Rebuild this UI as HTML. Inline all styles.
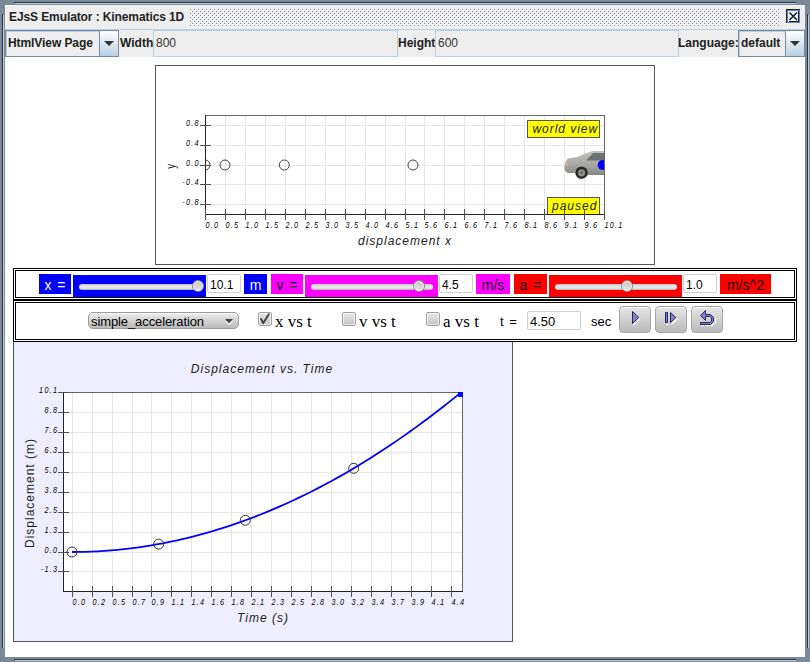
<!DOCTYPE html>
<html><head><meta charset="utf-8">
<style>
*{margin:0;padding:0;box-sizing:border-box}
html,body{width:810px;height:662px;overflow:hidden;background:#7a8a99;font-family:"Liberation Sans",sans-serif}
.a{position:absolute}
.tb{font-weight:bold;font-size:12px;color:#222;white-space:pre}
.lbl{font-size:14px;white-space:pre;text-align:center;line-height:20px;padding-top:1px;word-spacing:2px}
.num{background:#fff;border:1px solid #cfcfcf;border-radius:2px;font-size:12px;line-height:17px;padding:2px 0 0 2px;color:#000;white-space:pre}
.trk{height:6px;border-radius:3px;background:linear-gradient(#c4c4c4,#ececec 45%,#dedede 75%,#a8a8a8)}
.thm{width:12px;height:12px;border-radius:50%;border:1px solid #8c8c8c;background:linear-gradient(#c6c6c6,#e4e4e4);box-shadow:inset 0 0 0 1px #f4f4f4}
.sel{border:1px solid #9c9c9c;border-radius:5px;background:linear-gradient(#ececec,#d6d6d6 45%,#b9b9b9);box-shadow:inset 0 1px 0 #fafafa;font-size:13px;letter-spacing:-0.1px;line-height:15px;padding:1px 0 0 2px;color:#000;white-space:pre}
.chk{width:14px;height:14px;border:1px solid #a0a0a0;border-radius:2px;background:linear-gradient(#e8e8e8,#c4c4c4);box-shadow:inset 0 0 0 1px rgba(255,255,255,0.6)}
.ser{font-family:"Liberation Serif",serif;font-size:17px;line-height:20px;white-space:pre;color:#000}
.ctl{font-size:13px;line-height:16px;white-space:pre;color:#000;word-spacing:2px}
.btn{width:32px;height:27px;border:1px solid #a6a6a6;border-radius:4px;background:linear-gradient(#e6e6e6,#bababa);box-shadow:inset 0 1px 0 rgba(255,255,255,0.75)}
.tick{font-style:italic;font-size:8px;letter-spacing:0.8px;white-space:pre;color:#222}
</style></head><body>
<!-- frame corner lines -->
<div class="a" style="left:14px;top:2px;width:782px;height:1px;background:#333"></div>
<div class="a" style="left:15px;top:3px;width:781px;height:1px;background:#b8cfe5"></div>
<div class="a" style="left:2px;top:14px;width:1px;height:634px;background:#333"></div>
<div class="a" style="left:3px;top:15px;width:1px;height:633px;background:#b8cfe5"></div>
<div class="a" style="left:807px;top:14px;width:1px;height:634px;background:#333"></div>
<div class="a" style="left:808px;top:15px;width:1px;height:633px;background:#b8cfe5"></div>
<div class="a" style="left:14px;top:659px;width:782px;height:1px;background:#333"></div>
<div class="a" style="left:15px;top:660px;width:781px;height:1px;background:#b8cfe5"></div>

<!-- inner panel -->
<div class="a" style="left:5px;top:5px;width:800px;height:652px;background:#fff"></div>

<!-- title bar -->
<div class="a" style="left:5px;top:5px;width:800px;height:25px;background:#eeeeee;border-top:1px solid #f6f6f6;border-left:1px solid #f6f6f6"></div>
<div class="a tb" style="left:9px;top:10px;line-height:15px;letter-spacing:-0.1px">EJsS Emulator : Kinematics 1D</div>
<svg class="a" style="left:190px;top:9px" width="589" height="18">
<defs><pattern id="bp" width="4" height="4" patternUnits="userSpaceOnUse">
<rect x="0" y="0" width="1" height="1" fill="#7a8a99"/><rect x="2" y="2" width="1" height="1" fill="#7a8a99"/>
<rect x="1" y="1" width="1" height="1" fill="#ffffff"/><rect x="3" y="3" width="1" height="1" fill="#ffffff"/>
</pattern></defs>
<rect width="589" height="18" fill="url(#bp)"/></svg>
<!-- close button -->
<svg class="a" style="left:785px;top:8px" width="16" height="16" shape-rendering="crispEdges">
<rect x="2" y="2" width="12" height="12" fill="#eaf1fa"/>
<rect x="1" y="1" width="14" height="1" fill="#222"/><rect x="1" y="1" width="1" height="14" fill="#222"/>
<rect x="2" y="2" width="12" height="1" fill="#6382bf"/><rect x="2" y="2" width="1" height="12" fill="#6382bf"/>
<rect x="4" y="13" width="10" height="1" fill="#222"/><rect x="13" y="3" width="1" height="11" fill="#222"/>
<rect x="2" y="14" width="13" height="1" fill="#6382bf"/><rect x="14" y="2" width="1" height="13" fill="#6382bf"/>
<path d="M4.5 4.5L12 12M12 4.5L4.5 12" stroke="#111" stroke-width="1.4" shape-rendering="auto"/>
</svg>
<div class="a" style="left:5px;top:29px;width:800px;height:1px;background:#b8cfe5"></div>

<!-- toolbar -->
<div class="a" style="left:5px;top:30px;width:800px;height:27px;background:#eeeeee"></div>
<!-- combo HtmlView Page -->
<div class="a" style="left:5px;top:30px;width:114px;height:27px;border:1px solid #7a8a99;background:#eee"></div>
<div class="a" style="left:6px;top:31px;width:93px;height:25px;border-top:1px solid #b8cfe5;border-left:1px solid #b8cfe5"></div>
<div class="a tb" style="left:8px;top:36px;line-height:15px;letter-spacing:-0.08px">HtmlView Page</div>
<div class="a" style="left:99px;top:30px;width:20px;height:27px;border:1px solid #7a8a99;background:linear-gradient(#fff,#b8cfe5)"></div>
<svg class="a" style="left:103px;top:40px" width="12" height="8"><path d="M1 1H11L6 6Z" fill="#333"/></svg>
<div class="a tb" style="left:120px;top:36px;line-height:15px">Width</div>
<div class="a" style="left:153px;top:30px;width:245px;height:27px;border:1px solid #b8cfe5;background:#eee"></div>
<div class="a" style="left:156px;top:36px;font-size:12px;line-height:15px;color:#333">800</div>
<div class="a tb" style="left:398px;top:36px;line-height:15px">Height</div>
<div class="a" style="left:435px;top:30px;width:244px;height:27px;border:1px solid #b8cfe5;background:#eee"></div>
<div class="a" style="left:438px;top:36px;font-size:12px;line-height:15px;color:#333">600</div>
<div class="a tb" style="left:678px;top:36px;line-height:15px">Language:</div>
<div class="a" style="left:738px;top:30px;width:67px;height:27px;border:1px solid #7a8a99;background:#eee"></div>
<div class="a" style="left:739px;top:31px;width:46px;height:25px;border-top:1px solid #b8cfe5;border-left:1px solid #b8cfe5"></div>
<div class="a tb" style="left:741px;top:36px;line-height:15px">default</div>
<div class="a" style="left:785px;top:30px;width:20px;height:27px;border:1px solid #7a8a99;background:linear-gradient(#fff,#b8cfe5)"></div>
<svg class="a" style="left:789px;top:40px" width="12" height="8"><path d="M1 1H11L6 6Z" fill="#333"/></svg>

<!-- SIM_VIEW -->
<svg class="a" style="left:0;top:0" width="810" height="662" font-family="Liberation Sans">
<defs><clipPath id="simclip"><rect x="205" y="115" width="399" height="100"/></clipPath><clipPath id="grclip"><rect x="63" y="392" width="400" height="200"/></clipPath></defs>
<rect x="155.5" y="65.5" width="499" height="199" fill="#fff" stroke="#555" stroke-width="1"/>
<path d="M225.5 115V214M245.5 115V214M265.5 115V214M285.5 115V214M305.5 115V214M325.5 115V214M345.5 115V214M365.5 115V214M385.5 115V214M405.5 115V214M424.5 115V214M444.5 115V214M464.5 115V214M484.5 115V214M504.5 115V214M524.5 115V214M544.5 115V214M564.5 115V214M584.5 115V214M205 125.5H605M205 145.5H605M205 165.5H605M205 184.5H605M205 204.5H605" stroke="#e6e6e6" stroke-width="1" fill="none"/>
<g font-size="8.5" font-style="italic" fill="#000" letter-spacing="1.5">
<text transform="translate(205.50,228) scale(0.85,1)">0.0</text>
<text transform="translate(225.50,228) scale(0.85,1)">0.5</text>
<text transform="translate(245.50,228) scale(0.85,1)">1.0</text>
<text transform="translate(265.50,228) scale(0.85,1)">1.5</text>
<text transform="translate(285.50,228) scale(0.85,1)">2.0</text>
<text transform="translate(305.50,228) scale(0.85,1)">2.5</text>
<text transform="translate(325.50,228) scale(0.85,1)">3.0</text>
<text transform="translate(345.50,228) scale(0.85,1)">3.5</text>
<text transform="translate(365.50,228) scale(0.85,1)">4.0</text>
<text transform="translate(385.50,228) scale(0.85,1)">4.6</text>
<text transform="translate(405.50,228) scale(0.85,1)">5.1</text>
<text transform="translate(424.50,228) scale(0.85,1)">5.6</text>
<text transform="translate(444.50,228) scale(0.85,1)">6.1</text>
<text transform="translate(464.50,228) scale(0.85,1)">6.6</text>
<text transform="translate(484.50,228) scale(0.85,1)">7.1</text>
<text transform="translate(504.50,228) scale(0.85,1)">7.6</text>
<text transform="translate(524.50,228) scale(0.85,1)">8.1</text>
<text transform="translate(544.50,228) scale(0.85,1)">8.6</text>
<text transform="translate(564.50,228) scale(0.85,1)">9.1</text>
<text transform="translate(584.50,228) scale(0.85,1)">9.6</text>
<text transform="translate(604.50,228) scale(0.85,1)">10.1</text>
<text transform="translate(186.01,126) scale(0.85,1)">0.8</text>
<text transform="translate(186.01,146) scale(0.85,1)">0.4</text>
<text transform="translate(186.01,166) scale(0.85,1)">0.0</text>
<text transform="translate(182.33,185) scale(0.85,1)">-0.4</text>
<text transform="translate(182.33,205) scale(0.85,1)">-0.8</text>
</g>
<text x="405" y="245" font-size="12" font-style="italic" fill="#222" letter-spacing="1" text-anchor="middle">displacement x</text>
<text transform="translate(175,166.3) rotate(-90) scale(0.8,1)" font-size="12" fill="#222" text-anchor="middle">y</text>
<g clip-path="url(#simclip)">
<g fill="none" stroke="#444" stroke-width="1">
<circle cx="205" cy="165" r="5"/>
<circle cx="225" cy="165" r="5"/>
<circle cx="284.3" cy="165" r="5"/>
<circle cx="413" cy="165" r="5"/>
</g>
<defs><linearGradient id="carg" x1="0" y1="0" x2="0" y2="1"><stop offset="0" stop-color="#c2c2be"/><stop offset="0.5" stop-color="#a6a6a2"/><stop offset="0.8" stop-color="#8c8c88"/><stop offset="1" stop-color="#5a5a58"/></linearGradient></defs>
<g>
<path d="M564.5 168 Q564.8 161 568 158.5 L577 157 Q586 152.5 593 151 L606 151 L606 175 L588 175 Q585 179 580 179 Q576 178 575 173 L568 173 Q564.5 171.5 564.5 168 Z" fill="url(#carg)"/>
<path d="M586 160.5 L593 153 L606 153 L606 160.5 Z" fill="#6a7272"/>
<path d="M577 157.5 Q586 153 592 151.5" stroke="#d8d8d4" stroke-width="0.8" fill="none"/>
<circle cx="581.6" cy="172.6" r="6" fill="#262626"/><circle cx="581.6" cy="172.8" r="3.6" fill="#8e8e8c"/><circle cx="581.6" cy="172.8" r="1.2" fill="#5e5e5c"/>
<ellipse cx="566.6" cy="163.8" rx="1.3" ry="2.2" fill="#e6a898"/>
<circle cx="602.6" cy="165" r="4.9" fill="#0000ff"/>
</g>
</g>
<path d="M205 115.5H605M604.5 115V214" stroke="#666" stroke-width="1" fill="none"/>
<rect x="527.5" y="120.5" width="72" height="17" fill="#ffff00" stroke="#555"/>
<text x="532.5" y="133" font-size="12" font-style="italic" fill="#222" letter-spacing="0.95">world view</text>
<rect x="547.5" y="197.5" width="52" height="17" fill="#ffff00" stroke="#555"/>
<text x="552" y="209.8" font-size="12" font-style="italic" fill="#222" letter-spacing="1">paused</text>
<path d="M205.5 115V215M205 214.5H605" stroke="#222" stroke-width="1" fill="none"/>
<path d="M200 125.5H211M200 145.5H211M200 165.5H211M200 184.5H211M200 204.5H211M205.5 209V220M225.5 209V220M245.5 209V220M265.5 209V220M285.5 209V220M305.5 209V220M325.5 209V220M345.5 209V220M365.5 209V220M385.5 209V220M405.5 209V220M424.5 209V220M444.5 209V220M464.5 209V220M484.5 209V220M504.5 209V220M524.5 209V220M544.5 209V220M564.5 209V220M584.5 209V220M604.5 209V220" stroke="#505050" stroke-width="1" fill="none"/>
<rect x="13.5" y="341.5" width="499" height="300" fill="#eeeeff" stroke="#555" stroke-width="1"/>
<rect x="63" y="392" width="400" height="199" fill="#fff"/>
<path d="M72.5 392V591M92.5 392V591M112.5 392V591M132.5 392V591M151.5 392V591M171.5 392V591M191.5 392V591M211.5 392V591M231.5 392V591M251.5 392V591M271.5 392V591M291.5 392V591M311.5 392V591M331.5 392V591M351.5 392V591M371.5 392V591M391.5 392V591M411.5 392V591M431.5 392V591M451.5 392V591M63 412.5H463M63 432.5H463M63 452.5H463M63 472.5H463M63 492.5H463M63 512.5H463M63 532.5H463M63 552.5H463M63 571.5H463" stroke="#e6e6e6" stroke-width="1" fill="none"/>
<path d="M63 392.5H463M462.5 392V591" stroke="#666" stroke-width="1" fill="none"/>
<path d="M63.5 392V592M63 591.5H463" stroke="#222" stroke-width="1" fill="none"/>
<path d="M58 392.5H69M58 412.5H69M58 432.5H69M58 452.5H69M58 472.5H69M58 492.5H69M58 512.5H69M58 532.5H69M58 552.5H69M58 571.5H69M72.5 586V597M92.5 586V597M112.5 586V597M132.5 586V597M151.5 586V597M171.5 586V597M191.5 586V597M211.5 586V597M231.5 586V597M251.5 586V597M271.5 586V597M291.5 586V597M311.5 586V597M331.5 586V597M351.5 586V597M371.5 586V597M391.5 586V597M411.5 586V597M431.5 586V597M451.5 586V597" stroke="#505050" stroke-width="1" fill="none"/>
<g font-size="8.5" font-style="italic" fill="#000" letter-spacing="1.5">
<text transform="translate(39.12,393) scale(0.85,1)">10.1</text>
<text transform="translate(44.41,413) scale(0.85,1)">8.8</text>
<text transform="translate(44.41,433) scale(0.85,1)">7.6</text>
<text transform="translate(44.41,453) scale(0.85,1)">6.3</text>
<text transform="translate(44.41,473) scale(0.85,1)">5.0</text>
<text transform="translate(44.41,493) scale(0.85,1)">3.8</text>
<text transform="translate(44.41,513) scale(0.85,1)">2.5</text>
<text transform="translate(44.41,533) scale(0.85,1)">1.3</text>
<text transform="translate(44.41,553) scale(0.85,1)">0.0</text>
<text transform="translate(40.73,572) scale(0.85,1)">-1.3</text>
<text transform="translate(72.50,605) scale(0.85,1)">0.0</text>
<text transform="translate(92.50,605) scale(0.85,1)">0.2</text>
<text transform="translate(112.50,605) scale(0.85,1)">0.5</text>
<text transform="translate(132.50,605) scale(0.85,1)">0.7</text>
<text transform="translate(151.50,605) scale(0.85,1)">0.9</text>
<text transform="translate(171.50,605) scale(0.85,1)">1.1</text>
<text transform="translate(191.50,605) scale(0.85,1)">1.4</text>
<text transform="translate(211.50,605) scale(0.85,1)">1.6</text>
<text transform="translate(231.50,605) scale(0.85,1)">1.8</text>
<text transform="translate(251.50,605) scale(0.85,1)">2.1</text>
<text transform="translate(271.50,605) scale(0.85,1)">2.3</text>
<text transform="translate(291.50,605) scale(0.85,1)">2.5</text>
<text transform="translate(311.50,605) scale(0.85,1)">2.8</text>
<text transform="translate(331.50,605) scale(0.85,1)">3.0</text>
<text transform="translate(351.50,605) scale(0.85,1)">3.2</text>
<text transform="translate(371.50,605) scale(0.85,1)">3.4</text>
<text transform="translate(391.50,605) scale(0.85,1)">3.7</text>
<text transform="translate(411.50,605) scale(0.85,1)">3.9</text>
<text transform="translate(431.50,605) scale(0.85,1)">4.1</text>
<text transform="translate(451.50,605) scale(0.85,1)">4.4</text>
</g>
<text x="262" y="373" font-size="12" font-style="italic" fill="#222" letter-spacing="1" text-anchor="middle">Displacement vs. Time</text>
<text x="263" y="622" font-size="12" font-style="italic" fill="#222" letter-spacing="1" text-anchor="middle">Time (s)</text>
<text transform="translate(33.5,493) rotate(-90)" font-size="12" fill="#222" letter-spacing="1" text-anchor="middle">Displacement (m)</text>
<g clip-path="url(#grclip)">
<polyline points="72.00,552.00 78.50,551.96 85.00,551.82 91.50,551.60 98.00,551.29 104.50,550.89 111.00,550.40 117.50,549.82 124.00,549.15 130.50,548.39 137.00,547.54 143.50,546.61 150.00,545.58 156.50,544.47 163.00,543.27 169.50,541.98 176.00,540.60 182.50,539.13 189.00,537.57 195.50,535.92 202.00,534.18 208.50,532.35 215.00,530.44 221.50,528.43 228.00,526.34 234.50,524.16 241.00,521.88 247.50,519.52 254.00,517.07 260.50,514.53 267.00,511.90 273.50,509.19 280.00,506.38 286.50,503.49 293.00,500.50 299.50,497.43 306.00,494.26 312.50,491.01 319.00,487.67 325.50,484.24 332.00,480.72 338.50,477.11 345.00,473.41 351.50,469.63 358.00,465.75 364.50,461.79 371.00,457.73 377.50,453.59 384.00,449.36 390.50,445.04 397.00,440.62 403.50,436.13 410.00,431.54 416.50,426.86 423.00,422.09 429.50,417.24 436.00,412.29 442.50,407.26 449.00,402.13 455.50,396.92 462.00,391.62" fill="none" stroke="#0000ff" stroke-width="1.8"/>
<g fill="none" stroke="#333" stroke-width="1">
<circle cx="72.0" cy="552.0" r="5"/>
<circle cx="158.7" cy="544.1" r="5"/>
<circle cx="245.3" cy="520.3" r="5"/>
<circle cx="353.7" cy="468.3" r="5"/>
</g>
<rect x="458" y="392" width="5" height="5" fill="#0000ff"/>
</g>
</svg>
<!-- SLIDERS -->
<!-- panel 1 borders -->
<div class="a" style="left:13px;top:268px;width:784px;height:32px;border:1px solid #000"></div>
<div class="a" style="left:15px;top:270px;width:780px;height:28px;border:1px solid #000"></div>
<!-- panel 2 borders -->
<div class="a" style="left:13px;top:299px;width:784px;height:43px;border:1px solid #000;border-top-width:2px"></div>
<div class="a" style="left:15px;top:302px;width:780px;height:38px;border:1px solid #000"></div>

<!-- slider row -->
<div class="a lbl" style="left:39px;top:274px;width:32px;height:20px;background:#0000ff;color:#fff">x =</div>
<div class="a" style="left:73px;top:275px;width:133px;height:22px;background:#0000ff"></div>
<div class="a trk" style="left:79px;top:284px;width:122px"></div>
<div class="a thm" style="left:192px;top:280px"></div>
<div class="a num" style="left:207px;top:274px;width:34px;height:19px">10.1</div>
<div class="a lbl" style="left:244px;top:274px;width:23px;height:20px;background:#0000ff;color:#fff">m</div>

<div class="a lbl" style="left:271px;top:274px;width:32px;height:20px;background:#ff00ff;color:#111">v =</div>
<div class="a" style="left:305px;top:275px;width:133px;height:22px;background:#ff00ff"></div>
<div class="a trk" style="left:311px;top:284px;width:122px"></div>
<div class="a thm" style="left:413px;top:280px"></div>
<div class="a num" style="left:439px;top:274px;width:34px;height:19px">4.5</div>
<div class="a lbl" style="left:476px;top:274px;width:34px;height:20px;background:#ff00ff;color:#111">m/s</div>

<div class="a lbl" style="left:514px;top:274px;width:33px;height:20px;background:#ff0000;color:#111">a =</div>
<div class="a" style="left:549px;top:275px;width:133px;height:22px;background:#ff0000"></div>
<div class="a trk" style="left:555px;top:284px;width:122px"></div>
<div class="a thm" style="left:621px;top:280px"></div>
<div class="a num" style="left:683px;top:274px;width:34px;height:19px">1.0</div>
<div class="a lbl" style="left:720px;top:274px;width:51px;height:20px;background:#ff0000;color:#111">m/s^2</div>

<!-- controls row -->
<div class="a sel" style="left:88px;top:312px;width:151px;height:17px">simple_acceleration</div>
<svg class="a" style="left:224px;top:318px" width="11" height="8"><path d="M1 2H9L5 6.5Z" fill="#fff" transform="translate(0,0.8)"/><path d="M1 1H9L5 5.5Z" fill="#444"/></svg>

<div class="a chk" style="left:258px;top:312px"></div>
<svg class="a" style="left:259px;top:312px" width="14" height="14"><path d="M3.5 12.3H6.5" stroke="#fff" stroke-width="1" fill="none"/><path d="M2 7L4.3 11L9.8 2.2" fill="none" stroke="#3a3a3a" stroke-width="1.8" stroke-linecap="round"/></svg>
<div class="a ser" style="left:275px;top:312px">x vs t</div>
<div class="a chk" style="left:342px;top:312px"></div>
<div class="a ser" style="left:359px;top:312px">v vs t</div>
<div class="a chk" style="left:426px;top:312px"></div>
<div class="a ser" style="left:443px;top:312px">a vs t</div>

<div class="a ctl" style="left:500px;top:314px">t =</div>
<div class="a num" style="left:527px;top:311px;width:54px;height:19px;font-size:13px;line-height:17px;padding-top:1px">4.50</div>
<div class="a ctl" style="left:591px;top:314px">sec</div>

<div class="a btn" style="left:619px;top:306px"></div>
<div class="a btn" style="left:655px;top:306px"></div>
<div class="a btn" style="left:691px;top:306px"></div>
<svg class="a" style="left:619px;top:306px" width="110" height="28">
<g fill="none" stroke="#fff" stroke-width="1.2" transform="translate(1,1)">
<path d="M20 11.5L13.5 18"/>
<path d="M57.5 11.5L51.5 17.5M46 17.5H49"/>
<path d="M81.5 18.5H92L95.5 15V11.5"/>
</g>
<g stroke="#262666" stroke-width="1" fill="#8282c4" stroke-linejoin="miter">
<path d="M13.5 5.5L19.8 11.5L13.5 17.5Z"/>
<path d="M46.5 6.5H48.5V16.5H46.5Z"/>
<path d="M51.5 6.5L56.8 11.5L51.5 16.5Z"/>
<path d="M81.5 9.5L86.5 4.5V8.5H91.5L94.5 11.5V15.5L91.5 18.5H81.5V16.5H91L92.5 15V12L91 10.5H86.5V14.5Z"/>
</g>
</svg>

</body></html>
